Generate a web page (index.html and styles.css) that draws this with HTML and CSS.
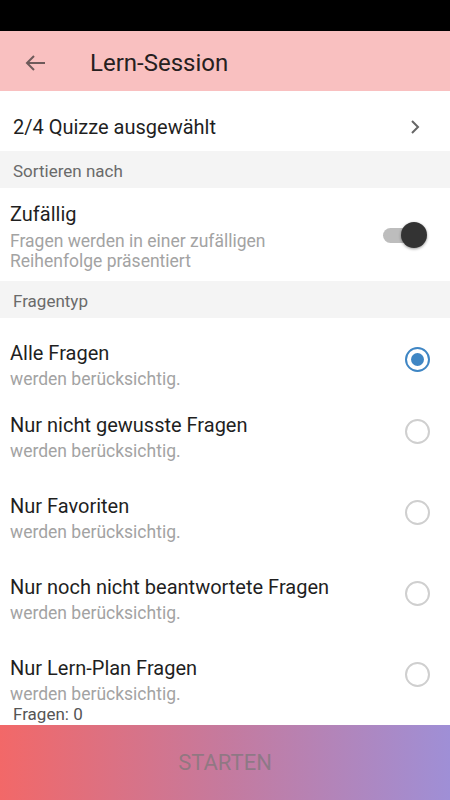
FILE: index.html
```html
<!DOCTYPE html>
<html lang="de">

<head>
    <meta charset="UTF-8">
    <meta name="viewport" content="width=device-width, initial-scale=1.0">
    <title>Lern-Session</title>
    <link rel="stylesheet" href="styles.css">
</head>

<body>
    <div class="status"></div>
    <header class="appbar">
        <svg class="back" width="22" height="18" viewBox="0 0 22 18">
            <path d="M21 9H3M10 2L3 9l7 7" fill="none" stroke="currentColor" stroke-width="2"/>
        </svg>
        <h1>Lern-Session</h1>
    </header>

    <main>
        <div class="quiz-row">
            <span>2/4 Quizze ausgewählt</span>
            <svg class="chevron" width="10" height="14" viewBox="0 0 10 14">
                <path d="M2 1l6 6-6 6" fill="none" stroke="currentColor" stroke-width="2"/>
            </svg>
        </div>

        <div class="section-head">Sortieren nach</div>

        <div class="toggle-row">
            <div class="texts">
                <p class="title">Zufällig</p>
                <p class="sub">Fragen werden in einer zufälligen<br>Reihenfolge präsentiert</p>
            </div>
            <span class="switch on"></span>
        </div>

        <div class="section-head">Fragentyp</div>

        <ul class="options">
            <li class="option">
                <div class="texts">
                    <p class="title">Alle Fragen</p>
                    <p class="sub">werden berücksichtig.</p>
                </div>
                <span class="radio checked"></span>
            </li>
            <li class="option">
                <div class="texts">
                    <p class="title">Nur nicht gewusste Fragen</p>
                    <p class="sub">werden berücksichtig.</p>
                </div>
                <span class="radio"></span>
            </li>
            <li class="option">
                <div class="texts">
                    <p class="title">Nur Favoriten</p>
                    <p class="sub">werden berücksichtig.</p>
                </div>
                <span class="radio"></span>
            </li>
            <li class="option">
                <div class="texts">
                    <p class="title">Nur noch nicht beantwortete Fragen</p>
                    <p class="sub">werden berücksichtig.</p>
                </div>
                <span class="radio"></span>
            </li>
            <li class="option">
                <div class="texts">
                    <p class="title">Nur Lern-Plan Fragen</p>
                    <p class="sub">werden berücksichtig.</p>
                </div>
                <span class="radio"></span>
            </li>
        </ul>

        <small class="count">Fragen: 0</small>
    </main>

    <button class="start" disabled>STARTEN</button>
</body>

</html>
```

FILE: styles.css
```css
* {
    box-sizing: border-box;
}

body {
    font-family: Roboto, "Liberation Sans", sans-serif;
    margin: 0;
    width: 450px;
    height: 800px;
    display: flex;
    flex-direction: column;
    background: #fff;
    color: #1f1f1f;
    overflow: hidden;
}

p {
    margin: 0;
}

.status {
    height: 31px;
    background: #000;
    flex-shrink: 0;
}

.appbar {
    height: 60px;
    flex-shrink: 0;
    background: #f9c0c0;
    display: flex;
    align-items: center;
    padding: 3px 0 0 24px;

    .back {
        color: #6e5a5a;
    }

    h1 {
        margin: 0 0 0 44px;
        font-size: 24px;
        font-weight: 400;
        color: #262020;
    }
}

main {
    flex: 1;
    display: flex;
    flex-direction: column;
}

.quiz-row {
    height: 60px;
    display: flex;
    align-items: center;
    justify-content: space-between;
    padding: 12px 30px 0 13px;
    font-size: 20px;

    .chevron {
        color: #666;
    }
}

.section-head {
    height: 37px;
    background: #f4f4f4;
    display: flex;
    align-items: center;
    padding: 3px 0 0 13px;
    font-size: 17px;
    color: #6a6a6a;
}

.texts {
    flex: 1;
}

.title {
    font-size: 20px;
    line-height: 24px;
}

.sub {
    font-size: 17.5px;
    line-height: 20px;
    color: #a3a3a3;
    margin-top: 4px;
}

.toggle-row {
    height: 93px;
    display: flex;
    align-items: flex-start;
    padding: 13px 27px 0 10px;

    .title {
        margin-top: 1px;
    }

    .sub {
        margin-top: 5px;
    }
}

.switch {
    position: relative;
    width: 40px;
    height: 15px;
    margin-top: 27px;
    border-radius: 8px;
    background: #bdbdbd;

    &::after {
        content: "";
        position: absolute;
        right: -4px;
        top: -6px;
        width: 26px;
        height: 26px;
        border-radius: 50%;
        background: #333;
        box-shadow: 0 1px 3px rgba(0, 0, 0, .4);
    }
}

.options {
    list-style: none;
    margin: 0;
    padding: 7px 0 0;
}

.option {
    display: flex;
    align-items: flex-start;
    padding: 16px 20px 17px 10px;

    &:first-child {
        padding-bottom: 8px;
    }

    &:last-child {
        padding-bottom: 0;
    }
}

.radio {
    width: 25px;
    height: 25px;
    margin-top: 6px;
    border-radius: 50%;
    border: 2px solid #cfcfcf;
    display: grid;
    place-items: center;

    &.checked {
        border-color: #3f86c4;

        &::after {
            content: "";
            width: 13px;
            height: 13px;
            border-radius: 50%;
            background: #3f86c4;
        }
    }
}

.count {
    display: block;
    padding-left: 13px;
    font-size: 17px;
    line-height: 20px;
    color: #555;
}

.start {
    height: 75px;
    flex-shrink: 0;
    margin-top: 1px;
    border: 0;
    font-family: inherit;
    font-size: 22px;
    color: rgba(120, 120, 120, .7);
    background: linear-gradient(90deg, #f26868, #c57a9e 50%, #9f8fd6);
}
```
